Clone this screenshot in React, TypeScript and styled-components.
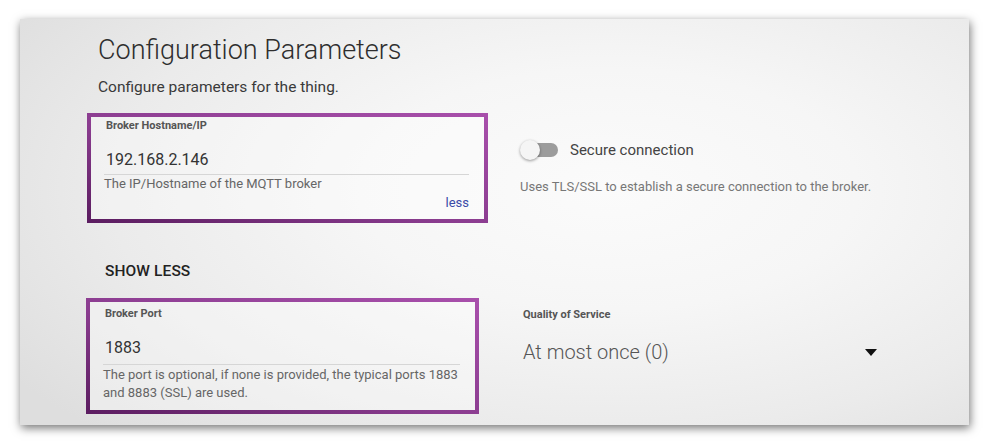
import React from "react";
import styled, { createGlobalStyle } from "styled-components";

const Global = createGlobalStyle`
  html, body { margin: 0; padding: 0; background: #ffffff; }
  body { font-family: Roboto, "Noto Sans", Arial, sans-serif; }
`;

const Page = styled.div`
  width: 989px;
  height: 445px;
  padding: 19px 0 0 20px;
  box-sizing: border-box;
`;

const Card = styled.section`
  width: 949px;
  height: 406px;
  box-sizing: border-box;
  padding: 15px 0 0 67px;
  background: radial-gradient(ellipse 75% 85% at 62% 42%, #fbfbfb 0%, #f6f6f6 35%, #ebebeb 70%, #dedede 100%);
  box-shadow: 1px 3px 9px rgba(0, 0, 0, 0.55);
  display: flex;
  flex-direction: column;
`;

const Title = styled.h1`
  margin: 0 0 0 11px;
  font-size: 27px;
  line-height: 33px;
  font-weight: 300;
  color: #2e2e2e;
`;

const Subtitle = styled.p`
  margin: 10px 0 0 11px;
  font-size: 15.5px;
  line-height: 20px;
  font-weight: 400;
  color: #3a3a3a;
`;

const Row = styled.div<{ $top: number }>`
  display: grid;
  grid-template-columns: 401px 1fr;
  margin-top: ${(p) => p.$top}px;
`;

const Box = styled.div<{ $width: number; $shift: number; $pt: number; $pb: number }>`
  width: ${(p) => p.$width}px;
  margin-left: ${(p) => p.$shift}px;
  box-sizing: border-box;
  border: 4px solid;
  border-image: linear-gradient(to top right, #5c1d61 0%, #8a3c8f 45%, #a84fab 100%) 1;
  padding: ${(p) => p.$pt}px 15px ${(p) => p.$pb}px 13px;
  background: rgba(255, 255, 255, 0.35);
  display: flex;
  flex-direction: column;
`;

const Label = styled.div`
  padding-left: 2px;
  font-size: 11px;
  line-height: 14px;
  font-weight: 700;
  color: #555555;
`;

const Value = styled.div<{ $gap: number; $pb: number }>`
  margin-top: ${(p) => p.$gap}px;
  padding: 0 0 ${(p) => p.$pb}px 2px;
  font-size: 16px;
  line-height: 20px;
  font-weight: 400;
  color: #333333;
  border-bottom: 1px solid #d6d6d6;
`;

const Helper = styled.div<{ $lh: number }>`
  font-size: 13px;
  line-height: ${(p) => p.$lh}px;
  color: #666666;
  margin-top: 1px;
`;

const LessLink = styled.a`
  align-self: flex-end;
  margin-top: 3px;
  font-size: 13px;
  line-height: 16px;
  color: #3b4aa8;
  text-decoration: none;
`;

const Side = styled.div<{ $pt: number; $left: number }>`
  padding-top: ${(p) => p.$pt}px;
  margin-left: ${(p) => p.$left}px;
  display: flex;
  flex-direction: column;
`;

const ToggleRow = styled.label`
  display: flex;
  align-items: center;
  gap: 12px;
  font-size: 15px;
  line-height: 20px;
  color: #444444;
`;

const Switch = styled.span`
  position: relative;
  width: 38px;
  height: 20px;
  display: inline-block;
`;

const Track = styled.span`
  position: absolute;
  left: 7px;
  top: 3px;
  width: 31px;
  height: 14px;
  border-radius: 7px;
  background: #9c9c9c;
`;

const Thumb = styled.span`
  position: absolute;
  left: 0;
  top: 0;
  width: 20px;
  height: 20px;
  border-radius: 50%;
  background: #f5f5f5;
  box-shadow: 0 1px 3px rgba(0, 0, 0, 0.4);
`;

const SideHelp = styled.div`
  margin-top: 19px;
  font-size: 13px;
  line-height: 16px;
  color: #777777;
`;

const ShowLess = styled.button`
  align-self: flex-start;
  margin: 38px 0 0 18px;
  padding: 0;
  border: none;
  background: none;
  font-family: inherit;
  font-size: 15.5px;
  line-height: 20px;
  font-weight: 500;
  color: #222222;
  letter-spacing: 0.1px;
`;

const SideLabel = styled(Label)`
  padding-left: 0;
`;

const Select = styled.div`
  margin-top: 17px;
  width: 354px;
  display: flex;
  align-items: center;
  justify-content: space-between;
  font-size: 20px;
  line-height: 26px;
  font-weight: 300;
  color: #555555;
`;

const Caret = styled.span`
  width: 0;
  height: 0;
  border-left: 6px solid transparent;
  border-right: 6px solid transparent;
  border-top: 7px solid #111111;
`;

export default function App() {
  return (
    <>
      <Global />
      <Page>
        <Card>
          <Title>Configuration Parameters</Title>
          <Subtitle>Configure parameters for the thing.</Subtitle>

          <Row $top={16}>
            <Box $width={401} $shift={0} $pt={2} $pb={8}>
              <Label>Broker Hostname/IP</Label>
              <Value $gap={17} $pb={4}>192.168.2.146</Value>
              <Helper $lh={16}>The IP/Hostname of the MQTT broker</Helper>
              <LessLink>less</LessLink>
            </Box>
            <Side $pt={27} $left={32}>
              <ToggleRow>
                <Switch>
                  <Track />
                  <Thumb />
                </Switch>
                Secure connection
              </ToggleRow>
              <SideHelp>Uses TLS/SSL to establish a secure connection to the broker.</SideHelp>
            </Side>
          </Row>

          <ShowLess>SHOW LESS</ShowLess>

          <Row $top={17}>
            <Box $width={393} $shift={-1} $pt={5} $pb={8}>
              <Label>Broker Port</Label>
              <Value $gap={17} $pb={6}>1883</Value>
              <Helper $lh={18}>
                The port is optional, if none is provided, the typical ports 1883 and 8883 (SSL) are used.
              </Helper>
            </Box>
            <Side $pt={10} $left={35}>
              <SideLabel>Quality of Service</SideLabel>
              <Select>
                At most once (0)
                <Caret />
              </Select>
            </Side>
          </Row>
        </Card>
      </Page>
    </>
  );
}
